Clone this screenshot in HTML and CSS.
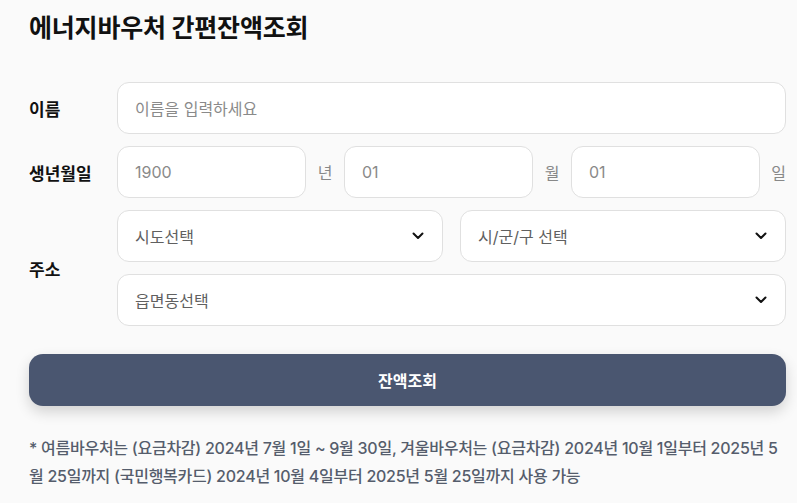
FILE: index.html
```html
<!DOCTYPE html>
<html lang="ko">
<head>
<meta charset="utf-8">
<link rel="stylesheet" href="styles.css">
</head>
<body>
<main class="page">
  <h1 class="title">에너지바우처 간편잔액조회</h1>
  <form class="form">
    <div class="row">
      <label class="label">이름</label>
      <div class="field">
        <div class="box"><span class="ph">이름을 입력하세요</span></div>
      </div>
    </div>
    <div class="row">
      <label class="label">생년월일</label>
      <div class="field birth">
        <div class="box"><span class="ph">1900</span></div><span class="unit">년</span>
        <div class="box"><span class="ph">01</span></div><span class="unit">월</span>
        <div class="box"><span class="ph">01</span></div><span class="unit">일</span>
      </div>
    </div>
    <div class="row">
      <label class="label">주소</label>
      <div class="field addr">
        <div class="addr-top">
          <div class="box select"><span class="val">시도선택</span><svg class="chev" viewBox="0 0 12 8"><path d="M1.5 1.5 6 6l4.5-4.5"/></svg></div>
          <div class="box select"><span class="val">시/군/구 선택</span><svg class="chev" viewBox="0 0 12 8"><path d="M1.5 1.5 6 6l4.5-4.5"/></svg></div>
        </div>
        <div class="box select full"><span class="val">읍면동선택</span><svg class="chev" viewBox="0 0 12 8"><path d="M1.5 1.5 6 6l4.5-4.5"/></svg></div>
      </div>
    </div>
    <button type="button" class="btn">잔액조회</button>
  </form>
  <p class="note">* 여름바우처는 (요금차감) 2024년 7월 1일 ~ 9월 30일, 겨울바우처는 (요금차감) 2024년 10월 1일부터 2025년 5월 25일까지 (국민행복카드) 2024년 10월 4일부터 2025년 5월 25일까지 사용 가능</p>
</main>
</body>
</html>
```
FILE: styles.css
```css
html, body {
  margin: 0;
  padding: 0;
  background: #fafafa;
}
body {
  font-family: "Inter", "Noto Sans CJK KR", sans-serif;
  color: #111;
}
.page {
  width: 757px;
  padding: 10px 0 0 29px;
}
.title {
  margin: 0;
  font-size: 25px;
  font-weight: 700;
  line-height: 36px;
  letter-spacing: -0.2px;
  color: #111;
}
.form {
  margin-top: 36px;
  display: flex;
  flex-direction: column;
  gap: 12px;
}
.row {
  display: flex;
  align-items: center;
}
.label {
  width: 88px;
  flex: none;
  font-size: 17px;
  font-weight: 700;
  color: #111;
}
.field {
  flex: 1;
  display: flex;
}
.box {
  box-sizing: border-box;
  height: 52px;
  flex: 1;
  background: #fff;
  border: 1px solid #e0e0e0;
  border-radius: 12px;
  display: flex;
  align-items: center;
  padding: 0 17px;
  font-size: 16px;
}
.ph {
  color: #8a8a8a;
}
.birth {
  align-items: center;
}
.birth .box {
  flex: none;
  width: 189px;
}
.unit {
  width: 38px;
  text-align: center;
  font-size: 16px;
  color: #888;
}
.birth .unit:last-child {
  width: 26px;
  text-align: right;
}
.addr {
  flex-direction: column;
  gap: 12px;
}
.addr-top {
  display: flex;
  gap: 17px;
}
.box.full {
  flex: none;
}
.select {
  justify-content: space-between;
}
.val {
  color: #606060;
}
.chev {
  width: 12px;
  height: 8px;
  fill: none;
  stroke: #111;
  stroke-width: 2;
  stroke-linecap: round;
  stroke-linejoin: round;
  margin-right: 1px;
}
.btn {
  margin-top: 16px;
  height: 52px;
  border: 0;
  border-radius: 14px;
  background: #4a5670;
  color: #fff;
  font-family: inherit;
  font-size: 16px;
  font-weight: 700;
  box-shadow: 0 6px 14px rgba(0, 0, 0, 0.16);
}
.note {
  margin: 28px 0 0;
  font-size: 16px;
  line-height: 28px;
  font-weight: 500;
  letter-spacing: -0.26px;
  color: #555d6c;
}
```
